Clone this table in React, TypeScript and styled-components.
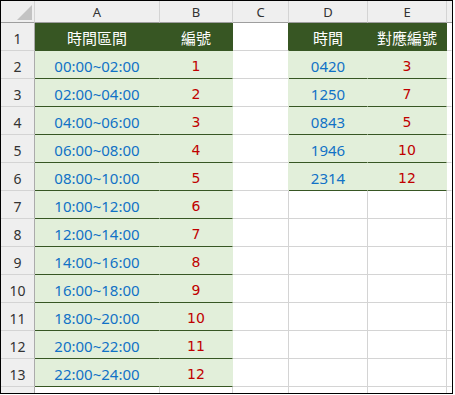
import React from 'react';
import styled, {createGlobalStyle} from 'styled-components';

const DARK = '#375623';
const LIGHT = '#e2efda';
const GRID = '#d4d4d4';
const HEAD_BG = '#efefef';

const GlobalStyle = createGlobalStyle`
    body {
        margin: 0;
        background: #ffffff;
    }
`

const LEFT_ROWS: [string, number][] = [
    ['00:00~02:00', 1], ['02:00~04:00', 2], ['04:00~06:00', 3], ['06:00~08:00', 4],
    ['08:00~10:00', 5], ['10:00~12:00', 6], ['12:00~14:00', 7], ['14:00~16:00', 8],
    ['16:00~18:00', 9], ['18:00~20:00', 10], ['20:00~22:00', 11], ['22:00~24:00', 12],
];

const RIGHT_ROWS: [string, number][] = [
    ['0420', 3], ['1250', 7], ['0843', 5], ['1946', 10], ['2314', 12],
];

const COLUMNS = ['A', 'B', 'C', 'D', 'E', ''];

type Kind = 'head' | 'data' | 'blank';

interface CellProps {
    $kind: Kind,
    $right: string,
    $last?: boolean,
    $tone?: 'time' | 'num'
}

const cellBg = (k: Kind) => k == 'head' ? DARK : k == 'data' ? LIGHT : '#ffffff';
const cellLine = (k: Kind) => k == 'head' ? DARK : k == 'data' ? DARK : GRID;

const Cell = styled.div<CellProps>`
    box-sizing: border-box;
    display: flex;
    align-items: center;
    justify-content: center;
    padding-top: 2px;
    background: ${p => cellBg(p.$kind)};
    border-right: 1px solid ${p => p.$right};
    border-bottom: ${p => p.$last ? 'none' : `1px solid ${cellLine(p.$kind)}`};
    white-space: nowrap;
    font-family: ${p => p.$tone == 'num' ? '"DejaVu Sans", sans-serif' : '"Noto Sans", "Noto Sans CJK TC", sans-serif'};
    font-size: ${p => p.$tone == 'num' ? '14px' : '15px'};
    color: ${p => p.$kind == 'head' ? '#ffffff' : p.$tone == 'num' ? '#c00000' : '#1172c6'};
`

const Sheet = styled.div`
    box-sizing: border-box;
    width: 453px;
    height: 394px;
    border: 1px solid #000000;
    display: grid;
    grid-template-columns: 34px 125px 73px 56px 79px 79px 1fr;
    grid-template-rows: 22px repeat(13, 28px) 1fr;
    overflow: hidden;
`

const Corner = styled.div`
    box-sizing: border-box;
    background: ${HEAD_BG};
    border-right: 1px solid ${GRID};
    border-bottom: 1px solid #9e9e9e;
    display: flex;
    align-items: flex-end;
    justify-content: flex-end;
    padding: 0 2px 2px 0;
`

const ColHead = styled.div<{$last?: boolean}>`
    box-sizing: border-box;
    background: ${HEAD_BG};
    border-right: ${p => p.$last ? 'none' : `1px solid ${GRID}`};
    border-bottom: 1px solid #9e9e9e;
    display: flex;
    align-items: center;
    justify-content: center;
    font-family: "Noto Sans", sans-serif;
    font-size: 13px;
    color: #333333;
`

const RowHead = styled.div<{$last?: boolean}>`
    box-sizing: border-box;
    background: ${HEAD_BG};
    border-right: 1px solid #ababab;
    border-bottom: ${p => p.$last ? 'none' : `1px solid ${GRID}`};
    display: flex;
    align-items: flex-end;
    justify-content: center;
    padding-bottom: 2px;
    font-family: "Noto Sans", sans-serif;
    font-size: 14px;
    color: #333333;
`

const App = () => {
    const rows = Array.from(new Array(14), (_, i) => i + 1);

    return (<>
        <GlobalStyle />
        <Sheet>
            <Corner>
                <svg width="15" height="15" viewBox="0 0 15 15">
                    <polygon points="15,0 15,15 0,15" fill="#c3c3c3" />
                </svg>
            </Corner>
            {COLUMNS.map((c, i) => <ColHead key={c + i} $last={i == COLUMNS.length - 1}>{c}</ColHead>)}

            {rows.map(r => {
                const last = r == 14;
                const left: Kind = r == 1 ? 'head' : r <= 13 ? 'data' : 'blank';
                const right: Kind = r == 1 ? 'head' : r <= 6 ? 'data' : 'blank';
                const leftRow = LEFT_ROWS[r - 2];
                const rightRow = RIGHT_ROWS[r - 2];
                const leftFill = left == 'blank' ? GRID : cellBg(left);
                const rightFill = right == 'blank' ? GRID : cellBg(right);

                return (<React.Fragment key={r}>
                    <RowHead $last={last}>{last ? '' : r}</RowHead>

                    {/* time slot table */}
                    <Cell $kind={left} $right={leftFill} $last={last} $tone="time">
                        {r == 1 ? '時間區間' : leftRow ? leftRow[0] : ''}
                    </Cell>
                    <Cell $kind={left} $right={leftFill} $last={last} $tone={r == 1 ? 'time' : 'num'}>
                        {r == 1 ? '編號' : leftRow ? leftRow[1] : ''}
                    </Cell>

                    <Cell $kind="blank" $right={right == 'blank' ? GRID : rightFill} $last={last} />

                    {/* lookup table */}
                    <Cell $kind={right} $right={rightFill} $last={last} $tone="time">
                        {r == 1 ? '時間' : rightRow ? rightRow[0] : ''}
                    </Cell>
                    <Cell $kind={right} $right={rightFill} $last={last} $tone={r == 1 ? 'time' : 'num'}>
                        {r == 1 ? '對應編號' : rightRow ? rightRow[1] : ''}
                    </Cell>

                    <Cell $kind="blank" $right="transparent" $last={last} />
                </React.Fragment>)
            })}
        </Sheet>
    </>)
}

export default App;
